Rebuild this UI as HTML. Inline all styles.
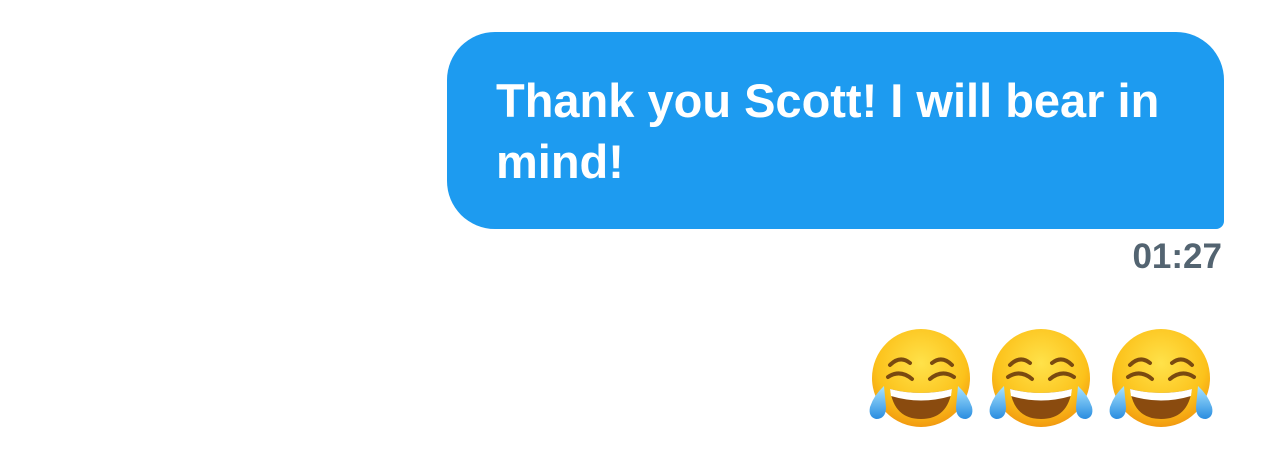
<!DOCTYPE html>
<html><head><style>
body{margin:0;width:1284px;height:468px;background:#fff;position:relative;overflow:hidden;font-family:"Liberation Sans",sans-serif}
.b{position:absolute;left:447px;top:32px;width:777px;height:197px;background:#1d9bf0;border-radius:48px 48px 8px 48px}
.t{position:absolute;left:496px;top:70px;width:700px;color:#fff;font-weight:bold;font-size:47px;line-height:61px}
.ts{position:absolute;right:62px;top:237px;color:#536471;font-weight:bold;font-size:35px}
svg{position:absolute;top:325px}
</style></head><body>
<div class="b"></div>
<div class="t">Thank you Scott! I will bear in mind!</div>
<div class="ts">01:27</div>
<svg width="0" height="0" style="position:absolute">
<defs>
<radialGradient id="g" cx="50%" cy="35%" r="65%"><stop offset="0" stop-color="#ffe24a"/><stop offset="0.7" stop-color="#fcc21b"/><stop offset="1" stop-color="#f29a10"/></radialGradient>
<linearGradient id="w" x1="0" y1="0" x2="0" y2="1"><stop offset="0" stop-color="#a8e4ff"/><stop offset="1" stop-color="#2a8de0"/></linearGradient>
<symbol id="e" viewBox="0 0 110 110">
<circle cx="55" cy="53" r="49" fill="url(#g)"/>
<path d="M24 40 Q34 30 44 38" stroke="#7a4a10" stroke-width="4" fill="none" stroke-linecap="round"/>
<path d="M66 38 Q76 30 86 40" stroke="#7a4a10" stroke-width="4" fill="none" stroke-linecap="round"/>
<path d="M22 52 Q34 44 46 54" stroke="#7a4a10" stroke-width="4" fill="none" stroke-linecap="round"/>
<path d="M64 54 Q76 44 88 52" stroke="#7a4a10" stroke-width="4" fill="none" stroke-linecap="round"/>
<path d="M24 64 Q55 72 86 64 Q82 94 55 94 Q28 94 24 64Z" fill="#8a4b0f"/>
<path d="M24 64 Q55 72 86 64 L85 71 Q55 80 25 71Z" fill="#fff"/>
<path d="M18 61 Q8 70 4 82 Q2 92 10 94 Q20 94 20 82Z" fill="url(#w)"/>
<path d="M92 61 Q102 70 106 82 Q108 92 100 94 Q90 94 90 82Z" fill="url(#w)"/>
</symbol></defs></svg>
<svg style="left:866px" width="110" height="110"><use href="#e"/></svg>
<svg style="left:986px" width="110" height="110"><use href="#e"/></svg>
<svg style="left:1106px" width="110" height="110"><use href="#e"/></svg>
</body></html>
